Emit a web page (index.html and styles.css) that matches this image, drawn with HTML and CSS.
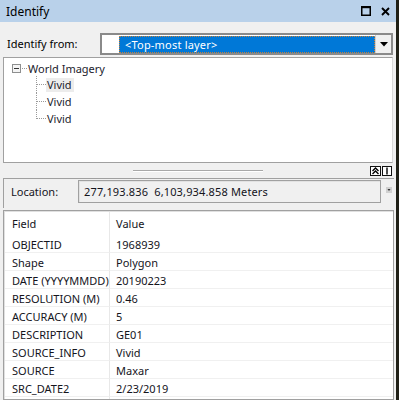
FILE: index.html
```html
<!DOCTYPE html>
<html>
<head>
<meta charset="utf-8">
<link rel="stylesheet" href="styles.css">
</head>
<body>
<div class="frame">
  <div class="main">
    <div class="titlebar">
      <span class="title">Identify</span>
      <span class="tb-icons">
        <svg class="ic-max" width="10" height="10" viewBox="0 0 10 10"><rect x="0.75" y="0.75" width="8.5" height="8.5" fill="none" stroke="#000" stroke-width="1.5"/><rect x="0" y="0" width="10" height="2.2" fill="#000"/></svg>
        <svg class="ic-close" width="9" height="9" viewBox="0 0 9 9"><path d="M1 1L8 8M8 1L1 8" stroke="#000" stroke-width="1.9" fill="none"/></svg>
      </span>
    </div>
    <div class="fromrow">
      <span class="fromlabel">Identify from:</span>
      <div class="combo">
        <span class="combo-blank"></span>
        <span class="combo-sel">&lt;Top-most layer&gt;</span>
        <span class="combo-btn"><svg width="8" height="5" viewBox="0 0 8 5"><path d="M0 0H8L4 4.5Z" fill="#000"/></svg></span>
      </div>
    </div>
    <div class="tree">
      <div class="node">
        <span class="expander"><svg width="9" height="9" viewBox="0 0 9 9"><rect x="0.5" y="0.5" width="8" height="8" fill="#f4f4f4" stroke="#8e8f8f"/><path d="M2 4.5H7" stroke="#333" stroke-width="1"/></svg></span>
        <span class="hdot"></span>
        <span class="nodetext">World Imagery</span>
      </div>
      <div class="children">
        <div class="child"><span class="conn"></span><span class="leaf sel">Vivid</span></div>
        <div class="child"><span class="conn"></span><span class="leaf">Vivid</span></div>
        <div class="child last"><span class="conn"></span><span class="leaf">Vivid</span></div>
      </div>
    </div>
    <div class="splitter">
      <span class="grip"></span>
      <span class="sbtns">
        <span class="sbtn"><svg width="9" height="8" viewBox="0 0 9 8"><path d="M1.5 4L4.5 1L7.5 4M1.5 7L4.5 4L7.5 7" stroke="#000" stroke-width="1.4" fill="none"/></svg></span>
        <span class="sbtn"><svg width="8" height="8" viewBox="0 0 8 8"><path d="M4 0.5V7.5" stroke="#000" stroke-width="1.4"/></svg></span>
      </span>
    </div>
    <div class="locgroup">
      <span class="loclabel">Location:</span>
      <div class="locbox">277,193.836&nbsp; 6,103,934.858 Meters</div>
      <span class="locbtn"><svg width="6" height="6" viewBox="0 0 6 6"><rect x="0" y="0" width="6" height="6" fill="#d0d0d0"/><path d="M1.5 2H4.5L3 4Z" fill="#333"/></svg></span>
    </div>
    <div class="table">
      <div class="cell c1 head">Field</div><div class="cell c2 head">Value</div>
      <div class="cell c1">OBJECTID</div><div class="cell c2">1968939</div>
      <div class="cell c1">Shape</div><div class="cell c2">Polygon</div>
      <div class="cell c1">DATE (YYYYMMDD)</div><div class="cell c2">20190223</div>
      <div class="cell c1">RESOLUTION (M)</div><div class="cell c2">0.46</div>
      <div class="cell c1">ACCURACY (M)</div><div class="cell c2">5</div>
      <div class="cell c1">DESCRIPTION</div><div class="cell c2">GE01</div>
      <div class="cell c1">SOURCE_INFO</div><div class="cell c2">Vivid</div>
      <div class="cell c1">SOURCE</div><div class="cell c2">Maxar</div>
      <div class="cell c1">SRC_DATE2</div><div class="cell c2">2/23/2019</div>
      <div class="cell c1"></div><div class="cell c2"></div>
    </div>
  </div>
  <div class="edge"></div>
</div>
</body>
</html>
```
FILE: styles.css
```css
* { box-sizing: border-box; }
html, body {
  margin: 0;
  padding: 0;
}
body {
  width: 399px;
  height: 400px;
  overflow: hidden;
  background: #f0f0f0;
  font-family: "Noto Sans", "Liberation Sans", sans-serif;
  font-size: 11px;
  color: #14141c;
}
.frame {
  display: flex;
  height: 400px;
}
.main {
  width: 396px;
  height: 400px;
  display: flex;
  flex-direction: column;
  overflow: hidden;
}
.main > * { flex-shrink: 0; }
.edge {
  flex: 1;
  background: #1f1f16;
}
.titlebar {
  height: 22px;
  background: #b9d1ea;
  display: flex;
  align-items: center;
  padding-left: 6px;
  padding-right: 6px;
}
.title {
  font-size: 12px;
  color: #000;
}
.tb-icons {
  margin-left: auto;
  display: flex;
  align-items: center;
  gap: 10px;
}
.ic-close { margin-top: 1px; }
.fromrow {
  height: 35px;
  display: flex;
  align-items: flex-start;
  padding-top: 11px;
  padding-left: 7px;
}
.fromlabel {
  width: 93px;
  line-height: 22px;
  color: #000;
}
.combo {
  width: 293px;
  height: 22px;
  border: 2px solid #8a8a8a;
  background: #fff;
  display: flex;
}
.combo-blank {
  width: 17px;
}
.combo-sel {
  flex: 1;
  background: #0078d7;
  color: #fff;
  outline: 1px dotted #c8823a;
  outline-offset: -1px;
  padding-left: 6px;
  line-height: 17px;
  margin: 0.5px 0;
  letter-spacing: 0.2px;
}
.combo-btn {
  width: 16px;
  background: #f0f0f0;
  border-left: 1px solid #d0d0d0;
  display: flex;
  align-items: center;
  justify-content: center;
}
.tree {
  margin-left: 3px;
  width: 390px;
  height: 106px;
  background: #fff;
  border: 1px solid #a0a0a0;
  border-right-color: #d8d8d8;
  padding-top: 2px;
  padding-left: 8px;
}
.node {
  display: flex;
  align-items: center;
  height: 16px;
}
.expander { display: flex; }
.hdot {
  width: 5px;
  border-top: 1px dotted #9a9a9a;
  margin-left: 1px;
}
.nodetext {
  margin-left: 1px;
  color: #1c1c2c;
}
.children {
  margin-left: 24px;
}
.child {
  display: flex;
  align-items: center;
  height: 17px;
}
.conn {
  width: 10px;
  align-self: stretch;
  position: relative;
}
.conn::before {
  content: "";
  position: absolute;
  left: 0;
  top: 0;
  bottom: 0;
  border-left: 1px dotted #9a9a9a;
}
.child.last .conn::before { bottom: 8px; }
.conn::after {
  content: "";
  position: absolute;
  left: 1px;
  right: 0;
  top: 8px;
  border-top: 1px dotted #9a9a9a;
}
.leaf {
  padding: 0 2px 0 1px;
  line-height: 14px;
  color: #1c1c2c;
}
.leaf.sel { background: #ececec; }
.splitter {
  height: 15px;
  display: flex;
  align-items: center;
  padding-left: 133px;
  padding-right: 4px;
}
.grip {
  width: 130px;
  height: 2px;
  border-top: 1px solid #a8a8a8;
  border-bottom: 1px solid #fff;
  margin-top: 1px;
}
.sbtns {
  margin-left: auto;
  display: flex;
  gap: 1px;
  margin-top: 1px;
}
.sbtn {
  height: 10px;
  border: 1px solid #111;
  background: #fff;
  display: flex;
  align-items: center;
  justify-content: center;
}
.sbtn:first-child { width: 11px; }
.sbtn:last-child { width: 10px; }
.locgroup {
  height: 30px;
  margin-left: 3px;
  width: 391px;
  border-top: 1px solid #a0a0a0;
  border-left: 1px solid #a0a0a0;
  display: flex;
  align-items: flex-start;
  padding-top: 1px;
  padding-left: 7px;
}
.loclabel {
  width: 67px;
  line-height: 23px;
}
.locbox {
  width: 303px;
  height: 23px;
  border: 1px solid #a0a0a0;
  box-shadow: inset 1px 1px 0 #e2e2e2;
  background: #f0f0f0;
  padding-left: 5px;
  line-height: 21px;
  letter-spacing: 0.15px;
}
.locbtn {
  margin-left: 5px;
  margin-top: 7px;
  display: flex;
}
.table {
  margin-top: 2px;
  margin-left: 3px;
  width: 391px;
  flex: 1 1 0;
  min-height: 0;
  overflow: hidden;
  background: #fff;
  border: 1px solid #a0a0a0;
  box-shadow: inset 1px 1px 0 #e0e0e0;
  display: grid;
  grid-template-columns: 105px 1fr;
  grid-template-rows: 23px;
  grid-auto-rows: 18px;
  align-content: start;
  padding-left: 1px;
  padding-top: 1px;
}
.cell {
  border-bottom: 1px solid #f0f0f0;
  line-height: 17px;
  padding-top: 1px;
  white-space: nowrap;
  overflow: hidden;
}
.cell.head {
  border-bottom: none;
  line-height: 23px;
  padding-top: 0;
}
.c1 {
  padding-left: 7px;
  border-right: 1px solid #e8e8e8;
}
.c2 {
  padding-left: 6px;
}
```
